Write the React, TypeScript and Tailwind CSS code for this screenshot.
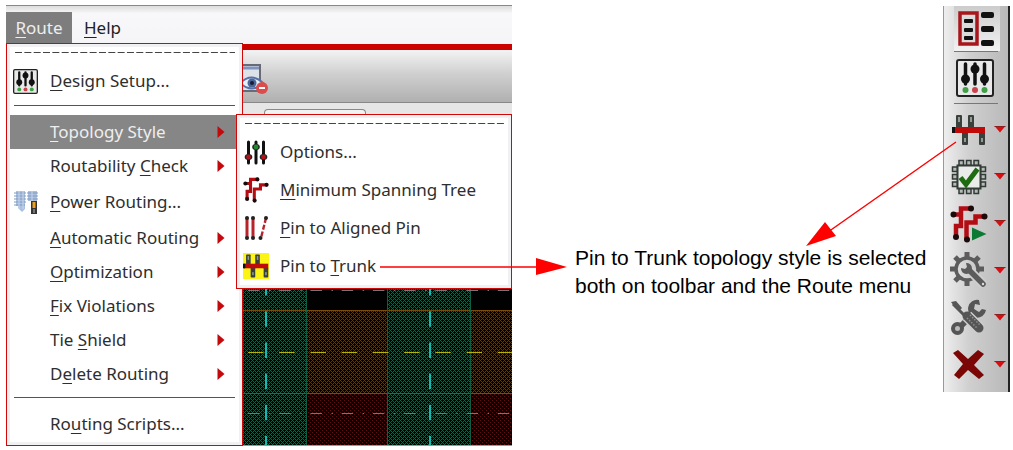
import React from "react";

type Item = {
  label: [string, string, string];
  icon?: React.ReactNode;
  arrow?: boolean;
  active?: boolean;
};

function Sliders({ knobs }: { knobs: [string, string, string] }) {
  return (
    <svg viewBox="0 0 26 26" className="size-[26px]" aria-hidden="true">
      <path d="M5.5 3v21M13 3v21M20.5 3v21" stroke="#111" strokeWidth="3" strokeLinecap="round" />
      <ellipse cx="5.5" cy="18" rx="3.8" ry="3" fill="#222" />
      <ellipse cx="13" cy="8" rx="3.8" ry="3" fill="#222" />
      <ellipse cx="20.5" cy="18" rx="3.8" ry="3" fill="#222" />
      <circle cx="5.5" cy="18" r="2.4" fill={knobs[0]} />
      <circle cx="13" cy="8" r="2.4" fill={knobs[1]} />
      <circle cx="20.5" cy="18" r="2.4" fill={knobs[2]} />
    </svg>
  );
}

function SetupIcon({ className }: { className: string }) {
  return (
    <svg viewBox="0 0 38 38" className={className} aria-hidden="true">
      <rect x="1" y="1" width="36" height="36" rx="2" fill="#e9e9e9" stroke="#222" strokeWidth="2" />
      <path d="M9.5 5v20M19 5v20M28.5 5v20" stroke="#111" strokeWidth="3.5" strokeLinecap="round" />
      <g fill="#111">
        <circle cx="9.5" cy="20" r="4.5" />
        <circle cx="19" cy="10" r="4.5" />
        <circle cx="28.5" cy="20" r="4.5" />
      </g>
      <circle cx="9.5" cy="31" r="3" fill="#3fa048" />
      <circle cx="19" cy="31" r="3" fill="#c8444a" />
      <circle cx="28.5" cy="31" r="3" fill="#3fa048" />
    </svg>
  );
}

function PowerIcon() {
  return (
    <svg viewBox="0 0 26 26" className="size-[26px]" aria-hidden="true">
      <path d="M3 2h9v18l-3 3-4-4V17H3zM15 2h9v10h-9z" fill="#a9c0e0" />
      <path d="M1 4h12M1 7h12M1 10h12M1 13h12M1 16h11M14 4h11M14 7h11M14 10h11" stroke="#8299bb" strokeWidth="1" />
      <path d="M6 2v18M10 2v18M19 2v10" stroke="#c8d8ef" strokeWidth="1" />
      <rect x="18" y="12" width="6" height="13" fill="#353535" />
      <path d="M21 13v6" stroke="#f0a020" strokeWidth="3" />
      <path d="M21 20v4" stroke="#777" strokeWidth="2" />
    </svg>
  );
}

function TreeIcon({ className, play }: { className: string; play?: boolean }) {
  return (
    <svg viewBox="0 0 38 38" className={className} aria-hidden="true">
      <path d="M6 31V21h5V3.500h11M3.500 9.500h7M16.500 34V17.500h9V11.500h8" fill="none" stroke="#b30d14" strokeWidth="4.500" />
      <g fill="#1a0a0a">
        <circle cx="3.500" cy="9.500" r="3" />
        <circle cx="21" cy="3.500" r="3" />
        <circle cx="6" cy="32" r="3" />
        <circle cx="17" cy="34.500" r="3" />
        <circle cx="34.500" cy="11.500" r="3" />
      </g>
      {play && <path d="M22 22.500v13l14.500-6.500z" fill="#0c7a35" />}
    </svg>
  );
}

function AlignedIcon() {
  return (
    <svg viewBox="0 0 26 26" className="size-[26px]" aria-hidden="true">
      <path d="M4 3v20M10 3v20" stroke="#b8222a" strokeWidth="3" />
      <path d="M23 3l-5 20" stroke="#b8222a" strokeWidth="2.400" strokeDasharray="5 2" />
      <g fill="#222">
        <circle cx="4" cy="3" r="2" />
        <circle cx="10" cy="3" r="2" />
        <circle cx="23" cy="3" r="2" />
        <circle cx="4" cy="23" r="2" />
        <circle cx="10" cy="23" r="2" />
        <circle cx="17.500" cy="23" r="2" />
      </g>
    </svg>
  );
}

function TrunkIcon({ className, tile }: { className: string; tile?: boolean }) {
  return (
    <svg viewBox="0 0 34 34" className={className} aria-hidden="true">
      {tile && <rect width="34" height="34" fill="#fbf414" />}
      <g fill="#3a413c">
        <rect x="4" y="2" width="6" height="13" rx="1" />
        <rect x="16" y="2" width="6" height="13" rx="1" />
        <rect x="10" y="19" width="6" height="13" rx="1" />
        <rect x="27" y="19" width="6" height="13" rx="1" />
      </g>
      <g fill="#929a94">
        <rect x="6" y="4" width="2" height="5" />
        <rect x="18" y="4" width="2" height="5" />
        <rect x="12" y="25" width="2" height="4" />
        <rect x="29" y="25" width="2" height="4" />
      </g>
      <rect x="1" y="14" width="32" height="6" fill="#c00a0a" />
      <rect x="0" y="14" width="3" height="6" fill="#111" />
    </svg>
  );
}

function ChipIcon() {
  return (
    <svg viewBox="0 0 36 36" className="size-9" aria-hidden="true">
      <g fill="#b5bbb6" stroke="#333b36" strokeWidth="1.500">
        {[8, 15.5, 23].map((p) => (
          <React.Fragment key={p}>
            <rect x={p} y="1.500" width="4.500" height="5" />
            <rect x={p} y="29.500" width="4.500" height="5" />
            <rect x="1.500" y={p} width="5" height="4.500" />
            <rect x="29.500" y={p} width="5" height="4.500" />
          </React.Fragment>
        ))}
      </g>
      <rect x="6.500" y="6.500" width="23" height="23" fill="#e9ece9" stroke="#333b36" strokeWidth="2" />
      <path d="M9.500 18.500l5.500 7 11.500-15.500" fill="none" stroke="#1f6b12" strokeWidth="5" />
    </svg>
  );
}

function GearIcon() {
  return (
    <svg viewBox="0 0 38 38" className="size-[38px]" aria-hidden="true">
      <circle cx="17" cy="17" r="11" fill="none" stroke="#5c5c5c" strokeWidth="3.500" />
      <g stroke="#5c5c5c" strokeWidth="5">
        <path d="M17 0v6M17 28v6M0 17h6M28 17h6M5 5l4 4M29 5l-4 4M5 29l4-4" />
      </g>
      <path d="M18 17l16 16" stroke="#cfcfcf" strokeWidth="9" />
      <path d="M19 18l14 14" stroke="#5c5c5c" strokeWidth="5.5" strokeLinecap="round" />
      <path d="M16 11a5.500 5.500 0 1 1-5 5l4 1 2-2z" fill="#5c5c5c" />
      <circle cx="33" cy="32" r="1.200" fill="#ddd" />
    </svg>
  );
}

function ToolsIcon() {
  return (
    <svg viewBox="0 0 38 38" className="size-[38px]" aria-hidden="true">
      <path d="M3 5l14 14" stroke="#555" strokeWidth="3" />
      <path d="M1 3l5-1 6 7-2 2-6-4z" fill="#555" />
      <path d="M10 28L26 12" stroke="#555" strokeWidth="6" />
      <circle cx="7.500" cy="29.500" r="4.500" fill="#bbb" stroke="#555" strokeWidth="4" />
      <path d="M29 1a9 9 0 1 0 7 10l-4-1-3 3-5-3 1-5 5 1z" fill="#555" />
      <path d="M17 17l13 13" stroke="#cfcfcf" strokeWidth="12" />
      <path d="M17 17l12 12" stroke="#555" strokeWidth="9" strokeLinecap="round" />
      <path d="M17 19l10 10M20 16l10 10" stroke="#909090" strokeWidth="1.500" strokeDasharray="1.500 1.500" />
    </svg>
  );
}

function CrossIcon() {
  return (
    <svg viewBox="0 0 38 38" className="size-[38px]" aria-hidden="true">
      <path d="M3 7l5-3 10 9 10-9 6 4-10 11 10 10-5 4-11-9-9 9-5-4 9-11z" fill="#7a0606" />
    </svg>
  );
}

function PanelIcon() {
  return (
    <svg viewBox="0 0 38 38" className="size-[38px]" aria-hidden="true">
      <rect x="2" y="3" width="17" height="31" fill="#dadada" stroke="#a8161b" strokeWidth="3.500" />
      <g fill="#111">
        <rect x="6" y="9" width="9" height="4" rx="1" />
        <rect x="6" y="18" width="9" height="4" rx="1" />
        <rect x="6" y="26" width="9" height="4" rx="1" />
        <rect x="23" y="2" width="13" height="6" rx="2" />
        <rect x="23" y="16" width="13" height="6" rx="2" />
        <rect x="23" y="30" width="13" height="6" rx="2" />
      </g>
    </svg>
  );
}

function TearOff() {
  return (
    <svg className="h-[18px] w-full px-1" aria-hidden="true">
      <line x1="1" y1="8.500" x2="100%" y2="8.500" stroke="#444" strokeWidth="1" strokeDasharray="7 2.330" />
    </svg>
  );
}

function MenuRow({ label, icon, arrow, active }: Item) {
  return (
    <button
      type="button"
      className={`flex w-full items-center text-left text-[17px] leading-6 ${icon ? "h-[38px]" : "h-[34px]"} ${
        active ? "bg-[#868686] text-[#eeeeee]" : "text-[#2e2e2e]"
      }`}
    >
      <span className="flex w-10 shrink-0 items-center pl-[3px]">{icon}</span>
      <span className="grow whitespace-nowrap">
        {label[0]}
        <u className="decoration-1 underline-offset-[3px] [text-decoration-skip-ink:none]">{label[1]}</u>
        {label[2]}
      </span>
      {arrow && (
        <svg viewBox="0 0 8 12" className="mr-[14px] h-3 w-2" aria-hidden="true">
          <path d="M0.500 0l7 6-7 6z" fill="#c4090c" />
        </svg>
      )}
    </button>
  );
}

const routeItems: Item[] = [
  { label: ["", "T", "opology Style"], arrow: true, active: true },
  { label: ["Routability ", "C", "heck"], arrow: true },
  { label: ["", "P", "ower Routing..."], icon: <PowerIcon /> },
  { label: ["", "A", "utomatic Routing"], arrow: true },
  { label: ["", "O", "ptimization"], arrow: true },
  { label: ["", "F", "ix Violations"], arrow: true },
  { label: ["Tie ", "S", "hield"], arrow: true },
  { label: ["D", "e", "lete Routing"], arrow: true },
];

const styleItems: Item[] = [
  { label: ["Options...", "", ""], icon: <Sliders knobs={["#b3141b", "#1d8a2c", "#b3141b"]} /> },
  { label: ["", "M", "inimum Spanning Tree"], icon: <TreeIcon className="size-[26px]" /> },
  { label: ["", "P", "in to Aligned Pin"], icon: <AlignedIcon /> },
  { label: ["Pin to ", "T", "runk"], icon: <TrunkIcon className="size-[26px]" tile /> },
];

function LayoutCanvas() {
  return (
    <svg className="min-h-0 w-full grow" viewBox="6 115 506 331" preserveAspectRatio="xMinYMin slice" aria-hidden="true">
      <defs>
        <pattern id="green" width="4" height="4" patternUnits="userSpaceOnUse">
          <path d="M0 0h1v1h-1zM1 1h1v1h-1zM2 2h1v1h-1zM3 3h1v1h-1zM3 1h1v1h-1zM1 3h1v1h-1z" fill="#0d6446" />
        </pattern>
        <pattern id="orange" width="4" height="4" patternUnits="userSpaceOnUse">
          <path d="M0 0h1v1h-1zM1 1h1v1h-1zM2 2h1v1h-1zM3 3h1v1h-1zM3 1h1v1h-1zM1 3h1v1h-1z" fill="#5f3c08" />
        </pattern>
        <pattern id="red" width="4" height="4" patternUnits="userSpaceOnUse">
          <path d="M0 0h1v1h-1zM2 2h1v1h-1z" fill="#6a0a0a" />
        </pattern>
      </defs>
      <rect x="6" y="115" width="506" height="331" fill="#020101" />
      <rect x="243" y="310" width="269" height="83" fill="url(#orange)" />
      <rect x="243" y="393" width="269" height="52" fill="url(#red)" />
      <rect x="243" y="115" width="64" height="330" fill="#020101" />
      <rect x="388" y="115" width="83" height="330" fill="#020101" />
      <rect x="243" y="115" width="64" height="330" fill="url(#green)" />
      <rect x="388" y="115" width="83" height="330" fill="url(#green)" />
      <path d="M243 310.500h269M243 393.500h269" stroke="#7a4a08" />
      <path d="M306.500 115v330M387.500 115v330M470.500 115v330" stroke="#0d5c44" />
      <path d="M248 290.500h264M248 413.500h264" stroke="#77757a" strokeDasharray="11.500 9.500 1.500 8.720" />
      <path d="M248 352.500h264" stroke="#b5b010" strokeDasharray="15.500 15.720" />
      <path d="M266 280v165M430 280v165" stroke="#18b8b0" strokeWidth="2" strokeDasharray="15.500 15.700" />
      <path d="M6 445.500h506" stroke="#999" />
    </svg>
  );
}

function ToolButton({ name, children }: { name: string; children: React.ReactNode }) {
  return (
    <div className="flex h-[47px] items-center justify-between pl-[6px] pr-[2px]">
      <button type="button" aria-label={name} className="flex size-[38px] items-center justify-center">
        {children}
      </button>
      <button type="button" aria-label={name + " options"} className="flex h-6 w-3 items-center">
        <svg viewBox="0 0 12 7" className="h-[7px] w-3" aria-hidden="true">
          <path d="M0.500 0h11L6 6.500z" fill="#d50f12" />
          <path d="M0.500 0.500h11" stroke="#8a2020" />
        </svg>
      </button>
    </div>
  );
}

export default function App() {
  return (
    <main className="relative flex items-start bg-white pl-[6px] pt-[5px] font-['Noto_Sans',sans-serif]">
      <section className="relative flex h-[441px] w-[506px] shrink-0 flex-col">
        <nav className="flex h-[39px] items-end border-t border-[#888] bg-linear-to-b from-[#dddddd] via-[#f8f8fa] via-20% to-[#f5f5f8] pb-px text-[17px] leading-[31px]">
          <button type="button" className="w-[66px] bg-[#7d7d7d] text-[#eeeeee]">
            <u className="decoration-1 underline-offset-[3px]">R</u>oute
          </button>
          <button type="button" className="px-3 text-[#222]">
            <u className="decoration-1 underline-offset-[3px]">H</u>elp
          </button>
        </nav>
        <div className="h-[6px] shrink-0 bg-[#cc0202]" />
        <div className="flex h-[53px] shrink-0 items-start border-b border-[#888] bg-linear-to-b from-[#f3f3f4] via-[#d0d0d0] via-45% to-[#b0b0b0] pl-[224px] pt-3">
          <svg viewBox="0 0 38 34" className="h-[34px] w-[38px]" aria-hidden="true">
            <rect x="2" y="3" width="28" height="26" fill="#dde2e8" stroke="#686b75" strokeWidth="2" />
            <path d="M3 6h26" stroke="#7e94bd" strokeWidth="3" />
            <path d="M10 21q12-11 23 0q-11 11-23 0z" fill="#e9eff8" stroke="#5572a8" strokeWidth="2" />
            <circle cx="22" cy="21" r="4.500" fill="#4c669b" />
            <circle cx="22" cy="21" r="2" fill="#171c30" />
            <circle cx="32" cy="26" r="6" fill="#dd4c4c" />
            <path d="M29 26h6" stroke="#fff" strokeWidth="2" />
          </svg>
        </div>
        <div className="flex h-[12px] shrink-0 items-end bg-[#e6e6e6] pl-[258px]">
          <div className="h-[6px] w-[102px] rounded-t border border-b-0 border-[#888] bg-[#f2f2f2]" />
        </div>
        <LayoutCanvas />

        <div className="absolute left-0 top-[38px] w-[237px] border border-[#d20808] bg-white p-[3px] pt-0 shadow-[inset_0_0_0_3px_#f1f1f3]">
          <TearOff />
          <MenuRow label={["", "D", "esign Setup..."]} icon={<SetupIcon className="size-[25px]" />} />
          <hr className="mx-1 mb-[9px] mt-[5px] border-[#555]" />
          {routeItems.map((item) => (
            <MenuRow key={item.label.join("")} {...item} />
          ))}
          <hr className="mx-1 mb-[9px] mt-[6px] border-[#555]" />
          <MenuRow label={["Ro", "u", "ting Scripts..."]} />
          <div className="h-px" />
        </div>

        <div className="absolute left-[230px] top-[109px] w-[276px] border border-[#d20808] bg-white p-[3px] pt-0 shadow-[inset_0_0_0_3px_#f1f1f3]">
          <TearOff />
          {styleItems.map((item) => (
            <MenuRow key={item.label.join("")} {...item} />
          ))}
        </div>
      </section>

      <p className="grow whitespace-nowrap pl-[63px] pt-[239px] font-['Liberation_Sans',sans-serif] text-[21px] leading-7 text-black">
        Pin to Trunk topology style is selected
        <br />
        both on toolbar and the Route menu
      </p>

      <aside className="mr-[3px] mt-px w-[67px] shrink-0 border-l border-r-2 border-l-[#999] border-r-[#222] bg-linear-to-r from-[#eeeeee] via-[#cfcfcf] via-40% to-[#b9b9b9] pb-1">
        <button type="button" aria-label="Panels" className="ml-[10px] flex h-[45px] w-[46px] items-center justify-center bg-linear-to-b from-[#cccccc] to-[#f2f2f2]">
          <PanelIcon />
        </button>
        <hr className="mx-[10px] border-[#777]" />
        <button type="button" aria-label="Design setup" className="ml-[10px] flex h-[51px] w-[46px] items-center justify-center pr-1">
          <SetupIcon className="size-[38px]" />
        </button>
        <hr className="mx-[10px] mb-[2px] border-[#777]" />
        <ToolButton name="Pin to trunk"><TrunkIcon className="size-[34px]" /></ToolButton>
        <ToolButton name="Routability check"><ChipIcon /></ToolButton>
        <ToolButton name="Automatic routing"><TreeIcon className="size-[38px]" play /></ToolButton>
        <ToolButton name="Optimization"><GearIcon /></ToolButton>
        <ToolButton name="Fix violations"><ToolsIcon /></ToolButton>
        <ToolButton name="Delete routing"><CrossIcon /></ToolButton>
      </aside>

      <svg viewBox="0 0 1013 450" className="pointer-events-none absolute left-0 top-0 h-[450px] w-[1013px]" aria-hidden="true">
        <path d="M380 267h160M956 142L828 232" stroke="#ff0000" strokeWidth="1.500" />
        <path d="M536 258l31 9-31 8zM806 246l19-24 11 14z" fill="#ff0000" />
      </svg>
    </main>
  );
}
